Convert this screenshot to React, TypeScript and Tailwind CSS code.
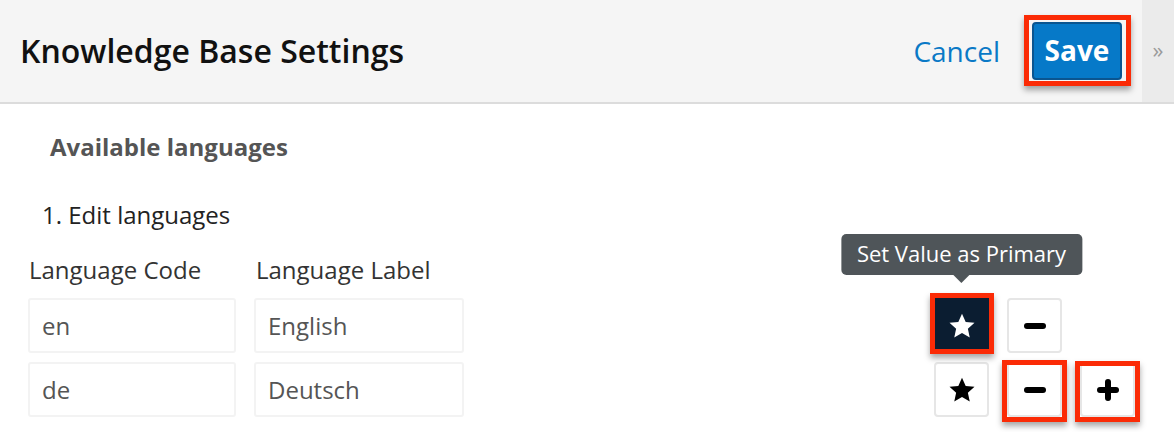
import React from "react";

const font = { fontFamily: '"Open Sans", "Noto Sans", sans-serif' };

function Star({ className }: { className?: string }) {
  return (
    <svg viewBox="0 0 24 24" className={className} fill="currentColor">
      <path d="M12 2.2l2.95 6.5 7.05.75-5.3 4.75 1.5 6.95L12 17.6l-6.2 3.55 1.5-6.95L2 9.45l7.05-.75z" />
    </svg>
  );
}

function Minus() {
  return <span className="block h-[6px] w-[22px] rounded-[3px] bg-black" />;
}

function Plus() {
  return (
    <span className="relative block h-[22px] w-[22px]">
      <span className="absolute left-0 top-[8px] h-[6px] w-[22px] rounded-[3px] bg-black" />
      <span className="absolute left-[8px] top-0 h-[22px] w-[6px] rounded-[3px] bg-black" />
    </span>
  );
}

function Callout({ className }: { className: string }) {
  return (
    <span
      className={`pointer-events-none absolute border-[5px] border-[#fb2b06] shadow-[0_4px_6px_rgba(0,0,0,0.35)] ${className}`}
    />
  );
}

function IconButton({
  children,
  dark,
}: {
  children: React.ReactNode;
  dark?: boolean;
}) {
  return (
    <button
      className={
        dark
          ? "flex h-[55px] w-[55px] items-center justify-center bg-[#0b1d31] text-white"
          : "flex h-[55px] w-[55px] items-center justify-center rounded-[4px] border-2 border-[#e6e6e6] bg-white text-black"
      }
    >
      {children}
    </button>
  );
}

function Field({ value, width }: { value: string; width: string }) {
  return (
    <div
      className={`flex h-[55px] ${width} items-center rounded-[3px] border-2 border-[#f3f3f3] bg-white pl-[12px] text-[24px] text-[#555]`}
    >
      {value}
    </div>
  );
}

export default function App() {
  return (
    <div className="h-[432px] w-[1174px] overflow-hidden bg-white" style={font}>
      <header className="flex h-[104px] border-b-2 border-[#dcdcdc] bg-[#f5f5f5]">
        <div className="flex flex-1 items-center pl-[20px] pr-[20px]">
          <h1 className="flex-1 text-[32px] font-semibold text-[#111]">
            Knowledge Base Settings
          </h1>
          <a className="mr-[32px] text-[28px] text-[#0a79c6]">Cancel</a>
          <div className="relative">
            <button className="flex h-[58px] w-[90px] items-center justify-center rounded-[4px] border-2 border-[#0a5590] bg-[#0679c8] pb-[2px] text-[28px] font-bold text-white">
              Save
            </button>
            <Callout className="-left-[8px] -right-[9px] -top-[7px] -bottom-[6px]" />
          </div>
        </div>
        <div className="flex w-[32px] items-center justify-center bg-[#ebebeb] pb-[4px] text-[22px] text-[#9a9a9a]">
          »
        </div>
      </header>

      <main className="relative h-[326px] pl-[28px]">
        <h2 className="pl-[22px] pt-[28px] text-[24px] font-bold leading-[30px] text-[#555]">
          Available languages
        </h2>
        <p className="pl-[14px] pt-[38px] text-[24px] leading-[30px] text-[#222]">
          1. Edit languages
        </p>
        <div className="flex pt-[25px] text-[24px] leading-[30px] text-[#333]">
          <span className="w-[226px] pl-[1px]">Language Code</span>
          <span className="pl-[2px]">Language Label</span>
        </div>

        <div className="mt-[13px] flex flex-col gap-[9px]">
          <div className="flex items-center">
            <Field value="en" width="w-[208px]" />
            <div className="w-[18px]" />
            <Field value="English" width="w-[210px]" />
            <div className="ml-[470px] flex gap-[18px]">
              <div className="relative">
                <IconButton dark>
                  <Star className="h-[30px] w-[30px]" />
                </IconButton>
                <Callout className="-left-[4px] -right-[5px] -top-[5px] -bottom-[1px]" />
                <div className="absolute bottom-[70px] left-1/2 -translate-x-1/2 whitespace-nowrap">
                  <div className="rounded-[5px] bg-[#4f5559] px-[16px] pb-[6px] pt-[4px] text-[22px] leading-[31px] text-white">
                    Set Value as Primary
                  </div>
                  <div className="mx-auto h-0 w-0 border-x-[8px] border-t-[8px] border-x-transparent border-t-[#4f5559]" />
                </div>
              </div>
              <IconButton>
                <Minus />
              </IconButton>
            </div>
          </div>
          <div className="flex items-center">
            <Field value="de" width="w-[208px]" />
            <div className="w-[18px]" />
            <Field value="Deutsch" width="w-[210px]" />
            <div className="ml-[470px] flex gap-[18px]">
              <IconButton>
                <Star className="h-[30px] w-[30px]" />
              </IconButton>
              <div className="relative">
                <IconButton>
                  <Minus />
                </IconButton>
                <Callout className="-left-[5px] -right-[5px] -top-[2px] -bottom-[5px]" />
              </div>
              <div className="relative">
                <IconButton>
                  <Plus />
                </IconButton>
                <Callout className="-left-[5px] -right-[5px] -top-[1px] -bottom-[5px]" />
              </div>
            </div>
          </div>
        </div>
      </main>
    </div>
  );
}
